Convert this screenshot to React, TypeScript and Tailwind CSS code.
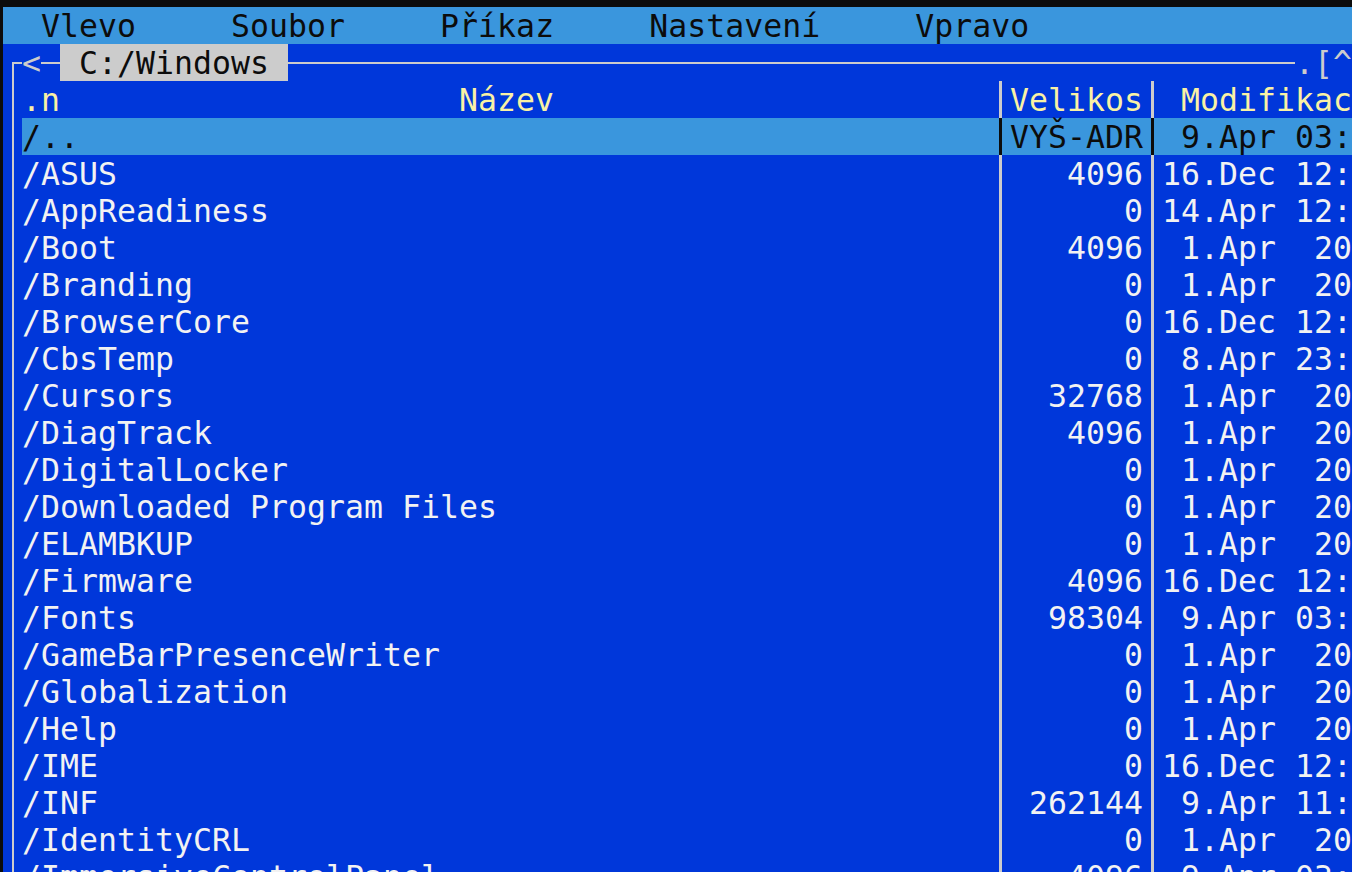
const files: [string, string, string][] = [
  ['/ASUS', '4096', '16.Dec 12:'],
  ['/AppReadiness', '0', '14.Apr 12:'],
  ['/Boot', '4096', ' 1.Apr  20'],
  ['/Branding', '0', ' 1.Apr  20'],
  ['/BrowserCore', '0', '16.Dec 12:'],
  ['/CbsTemp', '0', ' 8.Apr 23:'],
  ['/Cursors', '32768', ' 1.Apr  20'],
  ['/DiagTrack', '4096', ' 1.Apr  20'],
  ['/DigitalLocker', '0', ' 1.Apr  20'],
  ['/Downloaded Program Files', '0', ' 1.Apr  20'],
  ['/ELAMBKUP', '0', ' 1.Apr  20'],
  ['/Firmware', '4096', '16.Dec 12:'],
  ['/Fonts', '98304', ' 9.Apr 03:'],
  ['/GameBarPresenceWriter', '0', ' 1.Apr  20'],
  ['/Globalization', '0', ' 1.Apr  20'],
  ['/Help', '0', ' 1.Apr  20'],
  ['/IME', '0', '16.Dec 12:'],
  ['/INF', '262144', ' 9.Apr 11:'],
  ['/IdentityCRL', '0', ' 1.Apr  20'],
  ['/ImmersiveControlPanel', '4096', ' 9.Apr 03:'],
]

function VLine({ line }: { line: string }) {
  return (
    <div className="flex w-[19px] shrink-0 justify-center">
      <div className={line} />
    </div>
  )
}

function HLine({ width }: { width: string }) {
  return (
    <div className={`flex ${width} shrink-0 items-center`}>
      <div className="h-[2px] w-full bg-[#cccccc]" />
    </div>
  )
}

export default function App() {
  return (
    <div
      className="h-[872px] w-[1352px] overflow-hidden bg-[#0c0c0c] pl-[3px] pt-[7px] text-[31.5px] leading-[39px] tracking-[0.04px] whitespace-pre"
      style={{ fontFamily: '"DejaVu Sans Mono", "Liberation Mono", monospace' }}
    >
      {/* menu bar */}
      <div className="h-[37px] bg-[#3a96dd] text-[#0c0c0c]">
        {'  Vlevo     Soubor     Příkaz     Nastavení     Vpravo'}
      </div>

      <div className="bg-[#0037da]">
        {/* panel top border with path */}
        <div className="flex h-[37px] text-[#cccccc]">
          <div className="w-[19px] shrink-0 pl-[9px] pt-[18px]">
            <div className="h-[19px] w-[10px] border-l-2 border-t-2 border-[#cccccc]" />
          </div>
          <div className="w-[19px] shrink-0">{'<'}</div>
          <HLine width="w-[19px]" />
          <div className="h-[37px] w-[228px] shrink-0 bg-[#cccccc] text-[#0c0c0c]">{' C:/Windows '}</div>
          <HLine width="w-[1007px]" />
          <div className="w-[57px] shrink-0">{'.[^'}</div>
        </div>

        {/* column headers */}
        <div className="flex h-[37px] text-[#f9f1a5]">
          <VLine line="h-full w-[2px] bg-[#cccccc]" />
          <div className="w-[969px] shrink-0">{'.n                     Název'}</div>
          <VLine line="h-full w-[3px] bg-[#cccccc]" />
          <div className="w-[133px] shrink-0">Velikos</div>
          <VLine line="h-full w-[3px] bg-[#cccccc]" />
          <div className="w-[190px] shrink-0">{' Modifikac'}</div>
        </div>

        {/* parent dir, selected */}
        <div className="flex h-[37px]">
          <VLine line="h-full w-[2px] bg-[#cccccc]" />
          <div className="flex flex-1 bg-[#3a96dd] text-[#0c0c0c]">
            <div className="w-[969px] shrink-0">/..</div>
            <VLine line="h-full w-[3px] bg-[#0c0c0c]" />
            <div className="w-[133px] shrink-0">VYŠ-ADR</div>
            <VLine line="h-full w-[3px] bg-[#0c0c0c]" />
            <div className="w-[190px] shrink-0">{' 9.Apr 03:'}</div>
          </div>
        </div>

        {files.map(([name, size, date]) => (
          <div key={name} className="flex h-[37px] text-[#f2f2f2]">
            <VLine line="h-full w-[2px] bg-[#cccccc]" />
            <div className="w-[969px] shrink-0">{name}</div>
            <VLine line="h-full w-[3px] bg-[#cccccc]" />
            <div className="w-[133px] shrink-0 text-right">{size}</div>
            <VLine line="h-full w-[3px] bg-[#cccccc]" />
            <div className="w-[190px] shrink-0">{date}</div>
          </div>
        ))}
      </div>
    </div>
  )
}
